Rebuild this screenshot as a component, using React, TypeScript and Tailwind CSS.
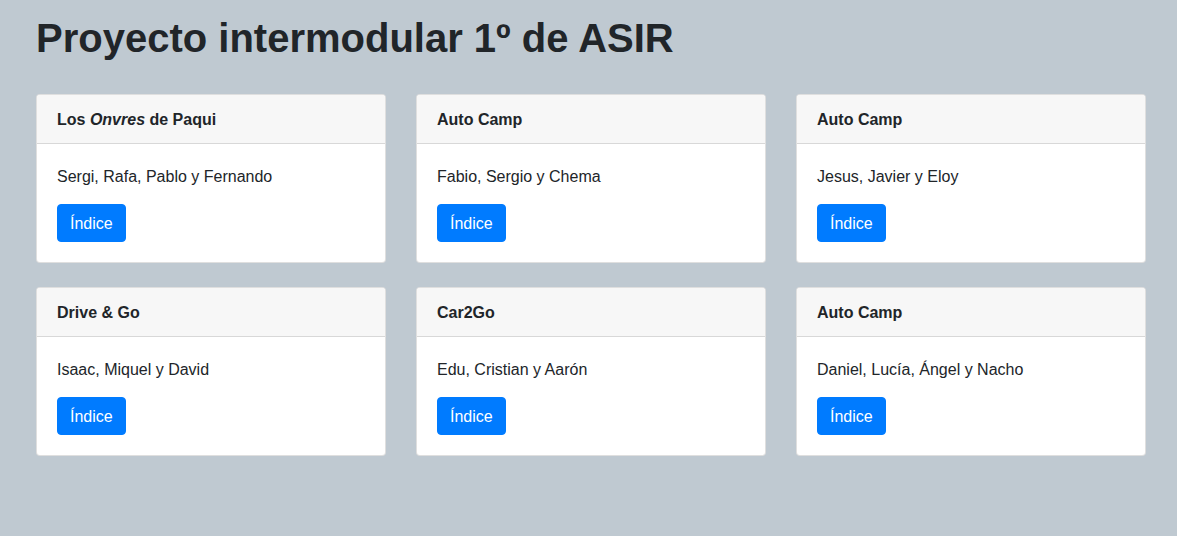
import React from "react";

type Team = { title: React.ReactNode; members: string };

const teams: Team[] = [
  {
    title: (
      <>
        Los <em>Onvres</em> de Paqui
      </>
    ),
    members: "Sergi, Rafa, Pablo y Fernando",
  },
  { title: "Auto Camp", members: "Fabio, Sergio y Chema" },
  { title: "Auto Camp", members: "Jesus, Javier y Eloy" },
  { title: "Drive & Go", members: "Isaac, Miquel y David" },
  { title: "Car2Go", members: "Edu, Cristian y Aarón" },
  { title: "Auto Camp", members: "Daniel, Lucía, Ángel y Nacho" },
];

const TeamCard = ({ team }: { team: Team }) => {
  return (
    <div className="w-[350px] bg-white border border-[rgba(0,0,0,0.125)] rounded-[4px] overflow-hidden">
      <div className="bg-[#f7f7f7] border-b border-[rgba(0,0,0,0.125)] px-5 pt-[13px] pb-[11px] leading-6 font-bold text-[16px]">
        {team.title}
      </div>
      <div className="px-5 pt-[21px] pb-5">
        <p className="leading-6 mb-[15px]">{team.members}</p>
        <a
          href="#"
          className="inline-block bg-[#007bff] text-white px-3 pt-[7px] pb-[5px] leading-6 rounded-[4px] border border-[#007bff]"
        >
          Índice
        </a>
      </div>
    </div>
  );
};

export default function App() {
  return (
    <div className="min-h-screen bg-[#bfc9d1] text-[#212529] font-['Liberation_Sans',Arial,sans-serif] text-[16px]">
      <div className="pl-[36px] pt-[14px]">
        <h1 className="text-[40px] leading-[48px] font-bold mb-8">
          Proyecto intermodular 1º de ASIR
        </h1>
        <div className="grid grid-cols-[350px_350px_350px] gap-x-[30px] gap-y-6">
          {teams.map((t, i) => (
            <TeamCard key={i} team={t} />
          ))}
        </div>
      </div>
    </div>
  );
}
